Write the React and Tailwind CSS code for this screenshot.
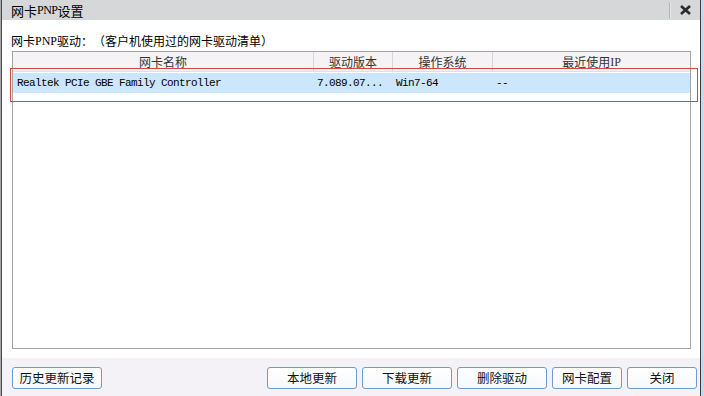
import React from "react";

const cjk = { fontFamily: '"Noto Sans CJK SC", "Noto Sans", sans-serif' };
const mono = { fontFamily: '"Liberation Mono", "DejaVu Sans Mono", monospace' };
const serif = { fontFamily: '"Liberation Serif", serif' };

function Btn({ w, children }) {
  return (
    <div
      className={`${w} h-[22px] flex items-center justify-center rounded-[3px] border border-[#6f9bd0] bg-gradient-to-b from-white to-[#f7f8fb] text-[12.5px] text-[#111] leading-none`}
      style={cjk}
    >
      {children}
    </div>
  );
}

export default function App() {
  return (
    <div className="w-[704px] h-[396px] flex bg-white overflow-hidden">
      <div className="w-px bg-[#a8a8a8]" />
      <div className="w-px bg-[#4a4a4a]" />
      <div className="flex-1 flex flex-col relative">
        {/* title bar */}
        <div className="h-[20px] flex items-center bg-[#d5d7d9] pl-[9px]">
          <div className="flex-1 text-[13px] leading-none text-black flex items-center" style={cjk}>
            <span>网卡</span>
            <span className="text-[12px] tracking-[-0.5px]" style={serif}>PNP</span>
            <span>设置</span>
          </div>
          <div className="w-px h-[16px] bg-[#b2b5b8]" />
          <div className="w-px h-[16px] bg-[#e6e7e8]" />
          <div className="w-[29px] flex items-center justify-center">
            <svg width="11" height="10" viewBox="0 0 11 10">
              <path d="M1 1 L10 9 M10 1 L1 9" stroke="#2a2a2a" strokeWidth="2.6" strokeLinecap="butt" />
            </svg>
          </div>
        </div>

        {/* label */}
        <div className="h-[31px] pt-[13px] pl-[9px] text-[12px] leading-[16px] text-black flex [text-spacing-trim:space-all]" style={cjk}>
          <span>网卡</span>
          <span className="text-[12px]" style={serif}>PNP</span>
          <span>驱动：（客户机使用过的网卡驱动清单）</span>
        </div>

        {/* table */}
        <div className="ml-[10px] w-[679px] h-[298px] border border-[#a3a3a3] flex flex-col">
          <div
            className="h-[20px] grid grid-cols-[301px_79px_100px_197px] bg-[#f6f3f6] border-b border-[#e2dfe2] text-[12px] text-[#333] leading-none"
            style={cjk}
          >
            <div className="flex items-center justify-center border-r border-[#d6d6d6]">网卡名称</div>
            <div className="flex items-center justify-center border-r border-[#d6d6d6]">驱动版本</div>
            <div className="flex items-center justify-center border-r border-[#d6d6d6]">操作系统</div>
            <div className="flex items-center justify-center">
              最近使用<span style={serif}>IP</span>
            </div>
          </div>
          <div className="h-px" />
          <div
            className="h-[20px] grid grid-cols-[301px_79px_100px_197px] bg-[#cce6fb] text-[11px] tracking-[-0.6px] text-black leading-none"
            style={mono}
          >
            <div className="flex items-center pl-[4px]">Realtek PCIe GBE Family Controller</div>
            <div className="flex items-center pl-[3px]">7.089.07...</div>
            <div className="flex items-center pl-[3px]">Win7-64</div>
            <div className="flex items-center pl-[3px]">--</div>
          </div>
        </div>

        {/* red highlight */}
        <div className="absolute left-[8px] top-[68px] w-[688px] h-[34px] border border-[#d04848]" />

        <div className="h-[9px]" />

        {/* footer */}
        <div className="flex-1 bg-[#f4f2f6] flex items-start justify-between pt-[9px] pl-[10px] pr-[3px]">
          <Btn w="w-[90px]">历史更新记录</Btn>
          <div className="flex gap-[5px]">
            <Btn w="w-[90px]">本地更新</Btn>
            <Btn w="w-[90px]">下载更新</Btn>
            <Btn w="w-[90px]">删除驱动</Btn>
            <Btn w="w-[70px]">网卡配置</Btn>
            <Btn w="w-[70px]">关闭</Btn>
          </div>
        </div>
      </div>
      <div className="w-px bg-[#3c3c3c]" />
      <div className="w-[3px] bg-[#c6d9ed]" />
    </div>
  );
}
